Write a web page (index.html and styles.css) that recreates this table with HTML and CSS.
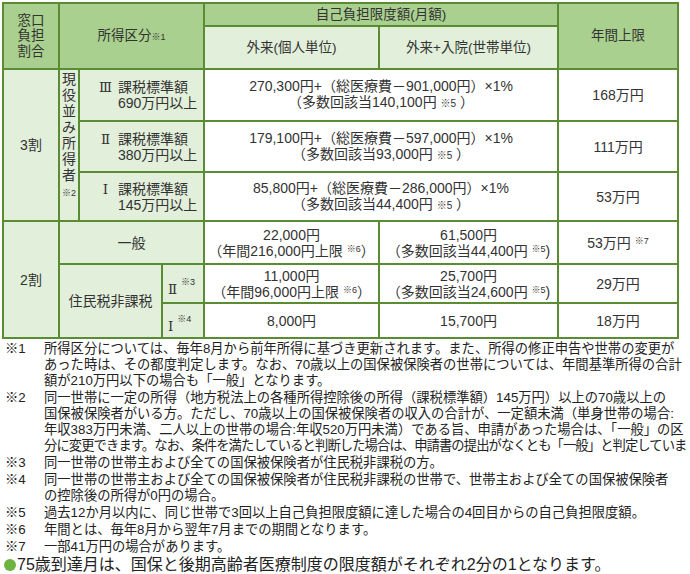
FILE: index.html
```html
<!DOCTYPE html>
<html lang="ja">
<head>
<meta charset="utf-8">
<title>自己負担限度額</title>
<link rel="stylesheet" href="styles.css">
</head>
<body>
<table class="grid">
  <colgroup>
    <col class="c1"><col class="c2"><col class="c3a"><col class="c3b"><col class="c4"><col class="c5"><col class="c6">
  </colgroup>
  <thead>
    <tr class="h1">
      <th rowspan="2" class="hd-ratio">窓口<br>負担<br>割合</th>
      <th rowspan="2" colspan="3">所得区分<small class="k">※1</small></th>
      <th colspan="2">自己負担限度額(月額)</th>
      <th rowspan="2">年間上限</th>
    </tr>
    <tr class="h2">
      <th class="sub">外来(個人単位)</th>
      <th class="sub">外来+入院(世帯単位)</th>
    </tr>
  </thead>
  <tbody>
    <tr class="r1">
      <td rowspan="3" class="lab">3割</td>
      <td rowspan="3" class="lab vert">現<br>役<br>並<br>み<br>所<br>得<br>者<br><small class="k">※2</small></td>
      <td colspan="2" class="lab cat"><span class="rn">Ⅲ</span>課税標準額<br><span class="ind">690万円以上</span></td>
      <td colspan="2">270,300円+（総医療費－901,000円）×1%<br>（多数回該当140,100円 <small class="k5">※5</small> ）</td>
      <td>168万円</td>
    </tr>
    <tr class="r2">
      <td colspan="2" class="lab cat"><span class="rn">Ⅱ</span>課税標準額<br><span class="ind">380万円以上</span></td>
      <td colspan="2">179,100円+（総医療費－597,000円）×1%<br>（多数回該当93,000円 <small class="k5">※5</small> ）</td>
      <td>111万円</td>
    </tr>
    <tr class="r3">
      <td colspan="2" class="lab cat"><span class="rn">Ⅰ</span>課税標準額<br><span class="ind">145万円以上</span></td>
      <td colspan="2">85,800円+（総医療費－286,000円）×1%<br>（多数回該当44,400円 <small class="k5">※5</small> ）</td>
      <td>53万円</td>
    </tr>
    <tr class="r4">
      <td rowspan="3" class="lab">2割</td>
      <td colspan="3" class="lab">一般</td>
      <td>22,000円<br>（年間216,000円上限 <sup class="k">※6</sup>）</td>
      <td>61,500円<br>（多数回該当44,400円 <sup class="k">※5</sup>)</td>
      <td>53万円 <sup class="k">※7</sup></td>
    </tr>
    <tr class="r5">
      <td rowspan="2" colspan="2" class="lab">住民税非課税</td>
      <td class="lab lv"><span class="rn2">Ⅱ</span> <sup class="k">※3</sup></td>
      <td>11,000円<br>（年間96,000円上限 <sup class="k">※6</sup>）</td>
      <td>25,700円<br>（多数回該当24,600円 <sup class="k">※5</sup>)</td>
      <td>29万円</td>
    </tr>
    <tr class="r6">
      <td class="lab lv"><span class="rn2">Ⅰ</span> <sup class="k">※4</sup></td>
      <td>8,000円</td>
      <td>15,700円</td>
      <td>18万円</td>
    </tr>
  </tbody>
</table>

<div class="notes">
  <div class="note"><span class="mark">※1</span><p>所得区分については、毎年8月から前年所得に基づき更新されます。また、所得の修正申告や世帯の変更が<br>あった時は、その都度判定します。なお、70歳以上の国保被保険者の世帯については、年間基準所得の合計<br>額が210万円以下の場合も「一般」となります。</p></div>
  <div class="note"><span class="mark">※2</span><p>同一世帯に一定の所得（地方税法上の各種所得控除後の所得（課税標準額）145万円）以上の70歳以上の<br>国保被保険者がいる方。ただし、70歳以上の国保被保険者の収入の合計が、一定額未満（単身世帯の場合:<br>年収383万円未満、二人以上の世帯の場合:年収520万円未満）である旨、申請があった場合は、「一般」の区<br><span class="tight">分に変更できます。なお、条件を満たしていると判断した場合は、申請書の提出がなくとも「一般」と判定していま</span></p></div>
  <div class="note"><span class="mark">※3</span><p>同一世帯の世帯主および全ての国保被保険者が住民税非課税の方。</p></div>
  <div class="note"><span class="mark">※4</span><p>同一世帯の世帯主および全ての国保被保険者が住民税非課税の世帯で、世帯主および全ての国保被保険者<br>の控除後の所得が0円の場合。</p></div>
  <div class="note"><span class="mark">※5</span><p>過去12か月以内に、同じ世帯で3回以上自己負担限度額に達した場合の4回目からの自己負担限度額。</p></div>
  <div class="note"><span class="mark">※6</span><p>年間とは、毎年8月から翌年7月までの期間となります。</p></div>
  <div class="note"><span class="mark">※7</span><p>一部41万円の場合があります。</p></div>
  <p class="foot"><span class="dot"></span>75歳到達月は、国保と後期高齢者医療制度の限度額がそれぞれ2分の1となります。</p>
</div>
</body>
</html>
```
FILE: styles.css
```css
html, body {
  overflow: hidden;
}
body {
  margin: 0;
  padding: 2px 0 0 2px;
  width: 688px;
  height: 572px;
  background: #fff;
  font-family: "Liberation Sans", "Noto Sans CJK JP", sans-serif;
  color: #333;
}
.grid {
  border-collapse: collapse;
  table-layout: fixed;
  width: 675px;
  font-size: 14px;
  line-height: 16px;
}
.c1 { width: 56px; }
.c2 { width: 20px; }
.c3a { width: 83px; }
.c3b { width: 42px; }
.c4 { width: 175px; }
.c5 { width: 179px; }
.c6 { width: 120px; }

.grid th, .grid td {
  border: 2px solid #5a8c34;
  padding: 0;
  text-align: center;
  vertical-align: middle;
  font-weight: normal;
  white-space: nowrap;
}
.grid th {
  background: #a9d08e;
  font-size: 13.5px;
}
.grid th.sub {
  background: #e2efda;
}
.hd-ratio {
  line-height: 15.5px;
}
.h1 { height: 23px; }
.h2 { height: 43px; }
.r1 { height: 52px; }
.r2 { height: 51px; }
.r3 { height: 49px; }
.r4 { height: 43px; }
.r5 { height: 39px; }
.r6 { height: 35px; }

.grid td.lab {
  background: #e2efda;
}
.grid td.vert {
  vertical-align: top;
  line-height: 16px;
  padding-top: 1px;
}
.grid td.cat {
  text-align: left;
  padding-left: 13px;
}
.rn {
  display: inline-block;
  width: 25px;
  text-align: center;
  font-family: "DejaVu Serif", "Liberation Serif", serif;
  font-size: 13.5px;
}
.ind {
  padding-left: 25px;
}
.rn2 {
  font-family: "DejaVu Serif", "Liberation Serif", serif;
  font-size: 13.5px;
  position: relative;
  top: 5px;
}
.k {
  font-size: 9px;
}
.k5 {
  font-size: 10px;
}
sup.k {
  vertical-align: 4px;
  line-height: 0;
}
.grid td.lv {
  text-align: left;
  padding-left: 5px;
}

.notes {
  margin-top: 2px;
  font-size: 13.3px;
  line-height: 16px;
  color: #222;
}
.note {
  display: flex;
  margin-bottom: 1px;
}
.mark {
  flex: none;
  width: 39px;
  padding-left: 3px;
}
.note p {
  margin: 0;
  white-space: nowrap;
}
.tight {
  letter-spacing: -0.9px;
}
.foot {
  margin: 0;
  display: flex;
  align-items: center;
  font-size: 16px;
  line-height: 18px;
  color: #222;
  white-space: nowrap;
}
.dot {
  flex: none;
  width: 12px;
  height: 12px;
  border-radius: 50%;
  background: #6db33f;
  margin: 0 1px 0 2px;
}
```
